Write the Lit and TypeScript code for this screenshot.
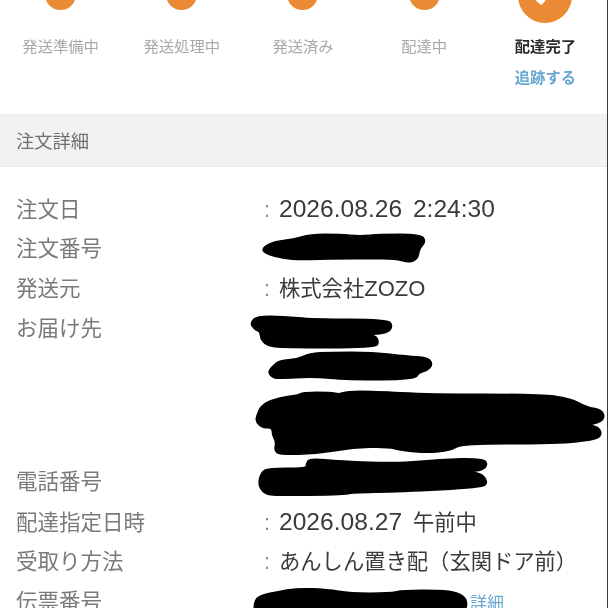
import {LitElement, html, svg, css} from 'lit';
import {customElement} from 'lit/decorators.js';

type Pt = [number, number];

const STEPS = ['発送準備中', '発送処理中', '発送済み', '配達中', '配達完了'];

const ROWS = [
    {label: '注文日', value: html`<span class="num">2026.08.26 2:24:30</span>`},
    {label: '注文番号'},
    {label: '発送元', value: html`株式会社<span class="latin">ZOZO</span>`},
    {label: 'お届け先', tall: true},
    {label: '電話番号'},
    {label: '配達指定日時', value: html`<span class="num">2026.08.27 </span>午前中`},
    {label: '受取り方法', value: html`あんしん置き配（玄関ドア前）`},
    {label: '伝票番号', link: true},
];

// marker scribbles over the private values, traced from the screenshot
const SCRIBBLES: Pt[][] = [
    [[263,248],[275,242],[295,240],[310,235],[340,235],[360,237],[380,235],[420,235],[425,241],[420,247],[418,252],[417,258],[410,262],[395,258],[370,258],[340,258],[300,259],[285,258],[265,253]],
    [[251,323],[257,317],[283,317],[313,320],[387,320],[392,326],[387,333],[360,334],[375,336],[378,342],[375,347],[283,347],[267,345],[261,338],[261,331],[255,329]],
    [[269,372],[273,367],[280,361],[297,360],[310,354],[330,353],[373,353],[407,357],[427,358],[432,364],[427,370],[418,372],[415,379],[347,379],[313,376],[277,378],[272,376]],
    [[257,417],[262,405],[280,398],[298,396],[303,393],[330,393],[340,395],[347,392],[373,392],[430,395],[540,395],[570,399],[587,408],[600,410],[604,416],[600,422],[583,425],[597,427],[601,433],[597,439],[557,443],[462,443],[450,450],[427,452],[403,450],[387,446],[353,447],[317,453],[280,454],[275,450],[277,442],[273,435],[273,427],[263,427],[257,422]],
    [[307,464],[310,459],[340,462],[400,464],[440,460],[482,459],[487,464],[482,470],[457,472],[480,473],[487,482],[482,487],[400,491],[350,492],[347,494],[273,495],[263,492],[259,483],[262,473],[268,469],[307,469]],
    [[255,602],[260,596],[280,592],[297,589],[327,590],[350,594],[390,594],[403,591],[440,591],[457,593],[467,600],[464,614],[255,614]],
];

// closed curve through the midpoints, so the ends come out round like a marker
const scribblePath = (pts: Pt[]) => {
    const mid = (a: Pt, b: Pt) => `${(a[0] + b[0]) / 2} ${(a[1] + b[1]) / 2}`;
    const n = pts.length;
    let d = `M${mid(pts[n - 1], pts[0])}`;
    pts.forEach((p, i) => {
        d += `Q${p[0]} ${p[1]} ${mid(p, pts[(i + 1) % n])}`;
    });
    return d + 'Z';
};

@customElement('app-root')
export class AppRoot extends LitElement {
    render() {
        return html`
            <div class="page">
                <div class="steps">
                    ${STEPS.map((s, i) => {
                        const last = i === STEPS.length - 1;
                        return html`
                            <div class="step ${last ? 'done' : ''}">
                                <div class="dot-box">
                                    <div class="dot">
                                        ${last ? html`
                                            <svg class="tick" viewBox="0 0 54 54" width="54" height="54">
                                                <path d="M14 24L23 33L40 12"></path>
                                            </svg>
                                        ` : ''}
                                    </div>
                                </div>
                                <div class="step-name">${s}</div>
                                ${last ? html`<a class="track">追跡する</a>` : ''}
                            </div>
                        `;
                    })}
                </div>
                <div class="section">注文詳細</div>
                <div class="rows">
                    ${ROWS.map(r => html`
                        <div class="row ${r.tall ? 'tall' : ''}">
                            <div class="label">${r.label}</div>
                            ${r.value ? html`<div class="colon">:</div><div class="value">${r.value}</div>` : ''}
                            ${r.link ? html`<a class="detail">詳細</a>` : ''}
                        </div>
                    `)}
                </div>
                <svg class="scribbles" viewBox="0 0 608 608" width="608" height="608">
                    ${SCRIBBLES.map(p => svg`<path d=${scribblePath(p)}></path>`)}
                </svg>
            </div>
        `;
    }

    static styles = css`
        :host {
            display: block;
            height: 608px;
            overflow: hidden;
            background: #fff;
            font-family: "Liberation Sans", "Noto Sans CJK JP", sans-serif;
        }

        .page {
            position: relative;
            height: 608px;
            box-sizing: border-box;
            border-right: 1px solid #3a3a3a;
            overflow: hidden;
            filter: blur(0.4px);
        }

        .steps {
            display: grid;
            grid-template-columns: repeat(5, 1fr);
            padding-right: 1px;
            height: 114px;
            box-sizing: border-box;
        }

        .step {
            display: flex;
            flex-direction: column;
            align-items: center;
        }

        .dot-box {
            height: 23px;
            display: flex;
            justify-content: center;
            align-items: flex-end;
        }

        .dot {
            width: 31px;
            height: 31px;
            margin-bottom: 13px;
            flex: none;
            border-radius: 50%;
            background: #ea8a35;
        }

        .done .dot {
            width: 54px;
            height: 54px;
            margin-bottom: 0;
        }

        .tick {
            display: block;
        }

        .tick path {
            fill: none;
            stroke: #fff;
            stroke-width: 5;
            stroke-linecap: round;
            stroke-linejoin: round;
        }

        .step-name {
            margin-top: 14px;
            font-size: 15.3px;
            line-height: 20px;
            color: #a8a8a8;
            white-space: nowrap;
        }

        .done .step-name {
            color: #2c2c2c;
            font-weight: 700;
        }

        .track {
            margin-top: 11px;
            font-size: 15.3px;
            line-height: 20px;
            font-weight: 700;
            color: #66a8d0;
        }

        .section {
            height: 53px;
            box-sizing: border-box;
            padding: 0 0 2px 16px;
            display: flex;
            align-items: center;
            font-size: 18.3px;
            color: #6f6f6f;
            background: #f2f2f2;
            border-top: 1px solid #e9e9e9;
            border-bottom: 1px solid #e9e9e9;
        }

        .rows {
            padding: 22px 0 0 16px;
        }

        .row {
            display: flex;
            align-items: baseline;
            height: 40px;
            line-height: 40px;
            font-size: 21.5px;
            white-space: nowrap;
        }

        .row.tall {
            height: 153px;
        }

        .label {
            width: 248px;
            color: #7a7a7a;
        }

        .colon {
            width: 15px;
            color: #8a8a8a;
        }

        .value {
            color: #3a3a3a;
            font-size: 21.3px;
        }

        .num {
            font-size: 24.6px;
            word-spacing: 4px;
        }

        .latin {
            font-size: 22px;
        }

        .detail {
            margin-left: 206px;
            font-size: 17px;
            color: #66a8d0;
        }

        .scribbles {
            position: absolute;
            left: 0;
            top: 0;
        }

        .scribbles path {
            fill: #000;
            stroke: #000;
            stroke-width: 3;
            stroke-linejoin: round;
        }
    `;
}
